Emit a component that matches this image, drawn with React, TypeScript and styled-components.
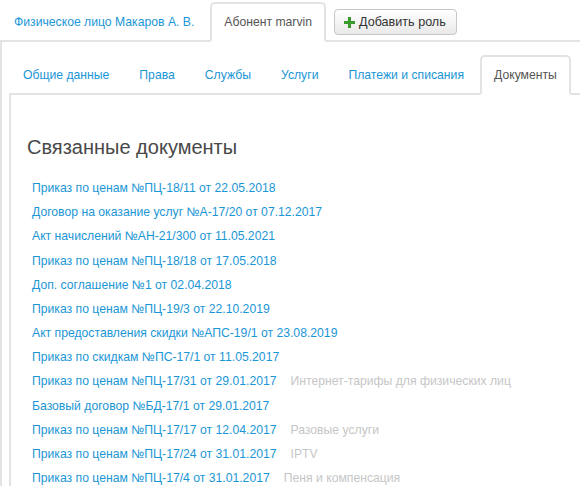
import styled, { createGlobalStyle } from "styled-components";

const GlobalStyle = createGlobalStyle`
  body {
    margin: 0;
    background: #fff;
    font-family: "Liberation Sans", Arial, sans-serif;
    font-size: 12.2px;
    color: #555;
  }
`;

// вкладки верхнего уровня (роли)
const RoleTabs = styled.div`
  display: flex;
  align-items: flex-end;
  padding-top: 2px;
  border-bottom: 2px solid #e3e3e3;
`;

const Tab = styled.div<{ $active?: boolean }>`
  height: 36px;
  display: flex;
  align-items: center;
  padding: 0 12px;
  margin-right: 2px;
  margin-bottom: -2px;
  border: 2px solid ${(p) => (p.$active ? "#e3e3e3" : "transparent")};
  border-bottom-color: ${(p) => (p.$active ? "#fff" : "transparent")};
  border-radius: 5px 5px 0 0;
  background: ${(p) => (p.$active ? "#fff" : "transparent")};
  color: ${(p) => (p.$active ? "#555" : "#1a96d6")};
  white-space: nowrap;
  cursor: pointer;
`;

const AddRoleButton = styled.button`
  align-self: flex-start;
  margin: 7px 0 0 6px;
  height: 26px;
  display: flex;
  align-items: center;
  gap: 4px;
  padding: 0 10px 0 9px;
  font: inherit;
  font-size: 12.6px;
  color: #333;
  background: linear-gradient(#fff, #e9e9e9);
  border: 1px solid #c6c6c6;
  border-radius: 4px;
  box-shadow: inset 0 1px 0 #fff;
`;

const PlusIcon = styled.svg`
  width: 11px;
  height: 11px;
`;

// контейнер роли
const RolePanel = styled.div`
  border-left: 2px solid #e3e3e3;
  padding: 13px 0 0 7px;
`;

const SectionTabs = styled.div`
  display: flex;
  align-items: flex-end;
  border-bottom: 2px solid #e3e3e3;
`;

const SectionPanel = styled.div`
  border-left: 2px solid #e3e3e3;
  padding: 39px 0 0 16px;
`;

const Title = styled.h2`
  margin: 0 0 16px;
  font-size: 20px;
  font-weight: normal;
  line-height: 26px;
  color: #484848;
`;

const DocList = styled.div`
  padding-left: 5px;
`;

const DocRow = styled.div`
  line-height: 24.17px;
  white-space: nowrap;
`;

const DocLink = styled.a`
  color: #1a96d6;
  text-decoration: none;
  cursor: pointer;
`;

const DocNote = styled.span`
  margin-left: 14px;
  color: #c6c6c6;
`;

const sections = [
  "Общие данные",
  "Права",
  "Службы",
  "Услуги",
  "Платежи и списания",
  "Документы",
];

const documents: { title: string; note?: string }[] = [
  { title: "Приказ по ценам №ПЦ-18/11 от 22.05.2018" },
  { title: "Договор на оказание услуг №А-17/20 от 07.12.2017" },
  { title: "Акт начислений №АН-21/300 от 11.05.2021" },
  { title: "Приказ по ценам №ПЦ-18/18 от 17.05.2018" },
  { title: "Доп. соглашение №1 от 02.04.2018" },
  { title: "Приказ по ценам №ПЦ-19/3 от 22.10.2019" },
  { title: "Акт предоставления скидки №АПС-19/1 от 23.08.2019" },
  { title: "Приказ по скидкам №ПС-17/1 от 11.05.2017" },
  {
    title: "Приказ по ценам №ПЦ-17/31 от 29.01.2017",
    note: "Интернет-тарифы для физических лиц",
  },
  { title: "Базовый договор №БД-17/1 от 29.01.2017" },
  { title: "Приказ по ценам №ПЦ-17/17 от 12.04.2017", note: "Разовые услуги" },
  { title: "Приказ по ценам №ПЦ-17/24 от 31.01.2017", note: "IPTV" },
  {
    title: "Приказ по ценам №ПЦ-17/4 от 31.01.2017",
    note: "Пеня и компенсация",
  },
];

const App = () => {
  return (
    <>
      <GlobalStyle />
      <RoleTabs>
        <Tab>Физическое лицо Макаров А. В.</Tab>
        <Tab $active>Абонент marvin</Tab>
        <AddRoleButton>
          <PlusIcon viewBox="0 0 10 10">
            <path d="M3.6 0h2.8v3.6H10v2.8H6.4V10H3.6V6.4H0V3.6h3.6z" fill="#3a9a2e" />
          </PlusIcon>
          Добавить роль
        </AddRoleButton>
      </RoleTabs>
      <RolePanel>
        <SectionTabs>
          {sections.map((s) => (
            <Tab key={s} $active={s === "Документы"}>
              {s}
            </Tab>
          ))}
        </SectionTabs>
        <SectionPanel>
          <Title>Связанные документы</Title>
          <DocList>
            {documents.map((d) => (
              <DocRow key={d.title}>
                <DocLink>{d.title}</DocLink>
                {d.note && <DocNote>{d.note}</DocNote>}
              </DocRow>
            ))}
          </DocList>
        </SectionPanel>
      </RolePanel>
    </>
  );
};

export default App;
